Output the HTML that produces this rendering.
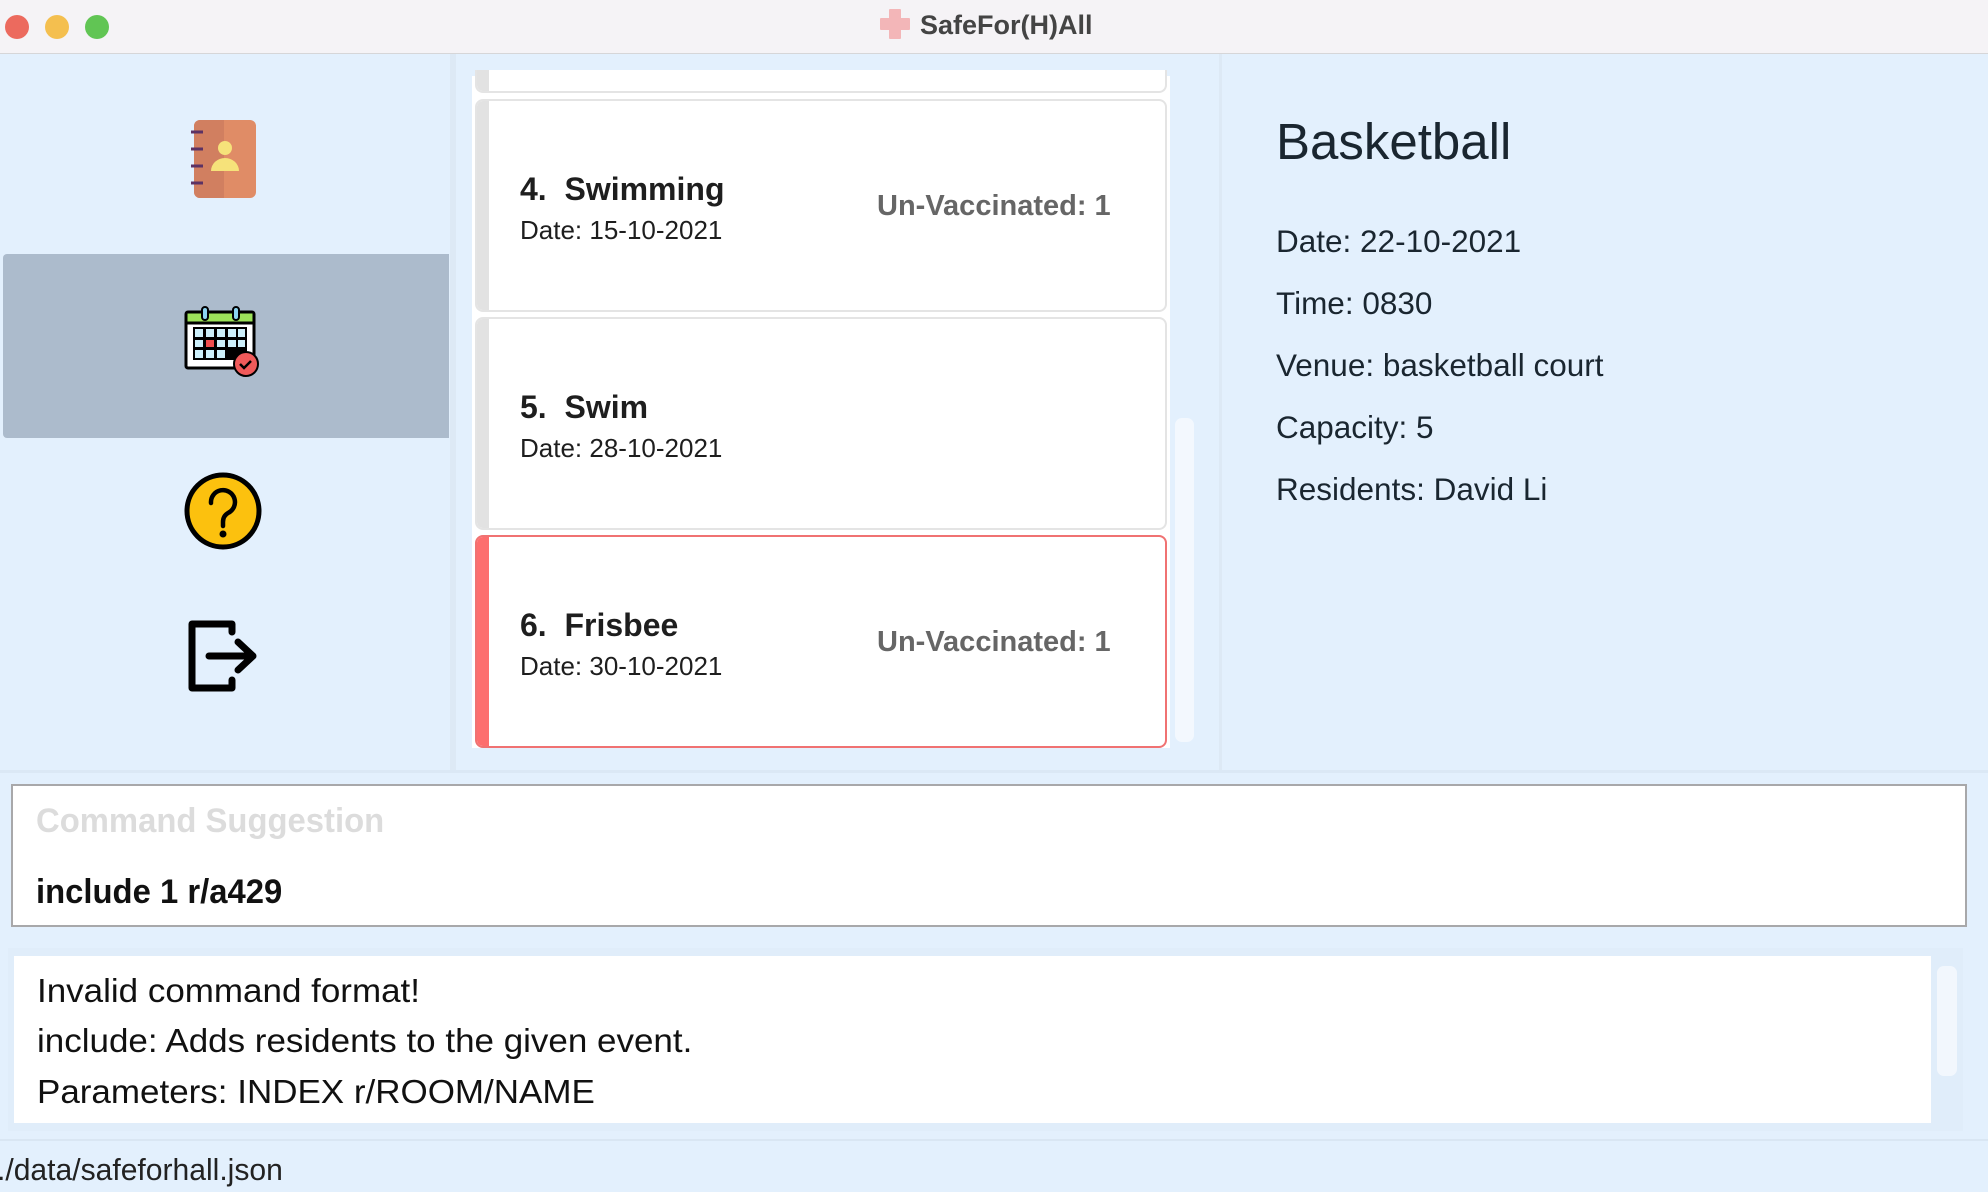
<!DOCTYPE html>
<html><head><meta charset="utf-8"><style>
*{margin:0;padding:0;box-sizing:border-box}
body{width:1988px;height:1192px;background:#e3f0fd;font-family:"Liberation Sans",sans-serif;position:relative;overflow:hidden}
.a{position:absolute;white-space:nowrap}
.card{position:absolute;left:475px;width:692px;background:#fff;border:2px solid #e4e4e4;border-radius:8px;overflow:hidden}
.card .bar{position:absolute;left:0;top:0;bottom:0;width:12px;background:#e2e2e2}
.t{font-weight:bold;font-size:32px;color:#1e1e1e}
.d{font-size:26px;color:#1e1e1e}
.u{font-weight:bold;font-size:29px;color:#666}
.det{font-size:31.5px;color:#1a2630;left:1276px}
.msg{font-size:33px;color:#111;left:37px;transform:scaleX(1.06);transform-origin:left}
</style></head><body>
<!-- title bar -->
<div class="a" style="left:0;top:0;width:1988px;height:54px;background:#f5f3f6;border-bottom:1px solid #d6d6d8"></div>
<div class="a" style="left:5px;top:15px;width:24px;height:24px;border-radius:50%;background:#ec6a5e"></div>
<div class="a" style="left:45px;top:15px;width:24px;height:24px;border-radius:50%;background:#f4bf4f"></div>
<div class="a" style="left:85px;top:15px;width:24px;height:24px;border-radius:50%;background:#61c554"></div>
<svg class="a" style="left:879px;top:8px" width="32" height="32"><path d="M11 2h10v9h9v10h-9v9H11v-9H2V11h9z" fill="#f3b6b8" stroke="#f3b6b8" stroke-linejoin="round" stroke-width="2"/></svg>
<div class="a" style="left:920px;top:10px;font-size:27px;font-weight:bold;color:#444">SafeFor(H)All</div>

<!-- sidebar -->
<div class="a" style="left:450px;top:54px;width:3px;height:716px;background:#dde9f5"></div>
<div class="a" style="left:3px;top:254px;width:446px;height:184px;background:#acbbcc;border-radius:4px 0 0 4px"></div>
<svg class="a" style="left:188px;top:118px" width="72" height="82" viewBox="0 0 72 82">
<rect x="6" y="2" width="62" height="78" rx="6" fill="#e08c66"/>
<rect x="6" y="2" width="30" height="78" rx="6" fill="#d17f60"/><rect x="24" y="2" width="12" height="78" fill="#d17f60"/>
<g stroke="#5c3264" stroke-width="3"><line x1="3" y1="14" x2="15" y2="14"/><line x1="3" y1="31" x2="15" y2="31"/><line x1="3" y1="48" x2="15" y2="48"/><line x1="3" y1="65" x2="15" y2="65"/></g>
<circle cx="37" cy="30" r="7" fill="#f6e27a"/><path d="M23 53a14 13 0 0 1 28 0z" fill="#f6e27a"/>
</svg>
<svg class="a" style="left:183px;top:305px" width="78" height="74">
<rect x="3" y="7" width="68" height="56" rx="2" fill="#fff" stroke="#000" stroke-width="3"/>
<rect x="4.5" y="8.5" width="65" height="9" fill="#9de25a"/>
<line x1="3" y1="18" x2="71" y2="18" stroke="#000" stroke-width="3"/>
<rect x="19" y="2" width="6" height="13" rx="3" fill="#8ad3f0" stroke="#000" stroke-width="2"/>
<rect x="50" y="2" width="6" height="13" rx="3" fill="#8ad3f0" stroke="#000" stroke-width="2"/>
<rect x="10" y="22" width="54" height="33" fill="#000"/>
<g fill="#cdf0fb">
<rect x="12" y="24" width="8" height="8"/><rect x="23" y="24" width="8" height="8"/><rect x="34" y="24" width="8" height="8"/><rect x="45" y="24" width="8" height="8"/><rect x="55" y="24" width="7" height="8"/>
<rect x="12" y="35" width="8" height="7"/><rect x="34" y="35" width="8" height="7"/><rect x="45" y="35" width="8" height="7"/><rect x="55" y="35" width="7" height="7"/>
<rect x="12" y="45" width="8" height="8"/><rect x="23" y="45" width="8" height="8"/><rect x="34" y="45" width="8" height="8"/></g>
<rect x="23" y="35" width="8" height="7" fill="#f04e4e"/>
<circle cx="63" cy="59" r="12" fill="#f05a5a" stroke="#000" stroke-width="2"/>
<path d="M57 59l4 4 7-7" fill="none" stroke="#000" stroke-width="2.5"/>
</svg>
<svg class="a" style="left:183px;top:471px" width="80" height="80"><circle cx="40" cy="40" r="36" fill="#fcc10e" stroke="#000" stroke-width="5"/>
<path d="M28 32a12 12 0 1 1 17 10q-5 3-5 9v4" fill="none" stroke="#000" stroke-width="4.5" stroke-linecap="round"/><circle cx="40" cy="63" r="3.5" fill="#000"/></svg>
<svg class="a" style="left:186px;top:618px" width="74" height="76"><path d="M46 14V6H6v64h40v-8" fill="none" stroke="#000" stroke-width="7" stroke-linejoin="round" stroke-linecap="round"/>
<path d="M23 38h44M52 24l15 14-15 14" fill="none" stroke="#000" stroke-width="7" stroke-linecap="round" stroke-linejoin="round"/></svg>

<!-- list -->
<div class="a" style="left:453px;top:54px;width:3px;height:716px;background:#dde9f5"></div>
<div class="a" style="left:1219px;top:54px;width:3px;height:716px;background:#dde9f5"></div>
<div class="a" style="left:472px;top:76px;width:698px;height:672px;background:#fff"></div>
<div class="card" style="top:70px;height:23px;border-top:none;border-radius:0 0 8px 8px"><div class="bar"></div></div>
<div class="card" style="top:99px;height:213px"><div class="bar"></div>
<div class="a t" style="left:43px;top:70px">4.&nbsp;&nbsp;Swimming</div>
<div class="a d" style="left:43px;top:114px">Date: 15-10-2021</div>
<div class="a u" style="left:400px;top:89px">Un-Vaccinated: 1</div></div>
<div class="card" style="top:317px;height:213px"><div class="bar"></div>
<div class="a t" style="left:43px;top:70px">5.&nbsp;&nbsp;Swim</div>
<div class="a d" style="left:43px;top:114px">Date: 28-10-2021</div></div>
<div class="card" style="top:535px;height:213px;border-color:#f07272"><div class="bar" style="background:#fd6e6e"></div>
<div class="a t" style="left:43px;top:70px">6.&nbsp;&nbsp;Frisbee</div>
<div class="a d" style="left:43px;top:114px">Date: 30-10-2021</div>
<div class="a u" style="left:400px;top:89px">Un-Vaccinated: 1</div></div>
<div class="a" style="left:1175px;top:418px;width:19px;height:324px;border-radius:7px;background:#f3f8fe"></div>

<!-- details -->
<div class="a" style="left:1276px;top:112px;font-size:51px;color:#1a2630">Basketball</div>
<div class="a det" style="top:223px">Date: 22-10-2021</div>
<div class="a det" style="top:285px">Time: 0830</div>
<div class="a det" style="top:347px">Venue: basketball court</div>
<div class="a det" style="top:409px">Capacity: 5</div>
<div class="a det" style="top:471px">Residents: David Li</div>

<!-- command -->
<div class="a" style="left:0;top:770px;width:1988px;height:3px;background:#dbe8f5"></div>
<div class="a" style="left:11px;top:784px;width:1956px;height:143px;background:#fff;border:2px solid #a8a8aa"></div>
<div class="a" style="left:36px;top:802px;font-size:34px;font-weight:bold;color:#dcdcdc;transform:scaleX(.965);transform-origin:left">Command Suggestion</div>
<div class="a" style="left:36px;top:873px;font-size:34px;font-weight:bold;color:#111;transform:scaleX(.965);transform-origin:left">include 1 r/a429</div>

<!-- result -->
<div class="a" style="left:8px;top:948px;width:1955px;height:183px;background:#e0edfa"></div>
<div class="a" style="left:14px;top:956px;width:1917px;height:167px;background:#fff"></div>
<div class="a" style="left:1937px;top:966px;width:20px;height:110px;border-radius:7px;background:#f2f7fd"></div>
<div class="a msg" style="top:972px">Invalid command format!</div>
<div class="a msg" style="top:1022px">include: Adds residents to the given event.</div>
<div class="a msg" style="top:1073px">Parameters: INDEX r/ROOM/NAME</div>
<div class="a" style="left:0;top:1139px;width:1988px;height:2px;background:#d9e6f3"></div>
<div class="a" style="left:-3px;top:1152px;font-size:31px;color:#222;transform:scaleX(.97);transform-origin:left">./data/safeforhall.json</div>
</body></html>
